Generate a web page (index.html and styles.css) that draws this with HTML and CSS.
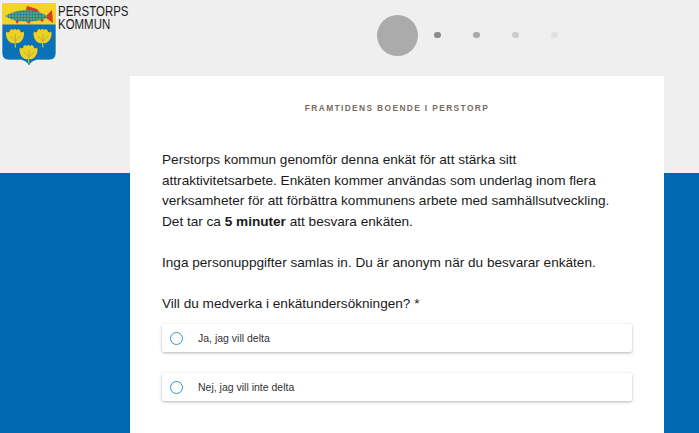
FILE: index.html
```html
<!DOCTYPE html>
<html lang="sv">
<head>
<meta charset="utf-8">
<title>Framtidens boende i Perstorp</title>
<link rel="stylesheet" href="styles.css">
</head>
<body>
<div class="page">
  <header class="top">
    <div class="brand">
      <svg class="crest" viewBox="0 0 57 67" width="57" height="67" aria-hidden="true">
        <defs>
          <pattern id="scales" width="3" height="3" patternUnits="userSpaceOnUse">
            <rect width="3" height="3" fill="#2c8f97"/>
            <circle cx="1" cy="1" r="0.7" fill="#b9b43a"/>
            <circle cx="2.5" cy="2.5" r="0.5" fill="#1f6f9e"/>
          </pattern>
          <g id="leaf">
            <path d="M9.500 19.500L9 15C7 16 3 14.500 1.500 10.500C0.500 8 0 5 1 3.500C2 4.500 3 4.500 4 4C4 2 5.500 1 7 1C7 2 8 2.500 9.500 0.500C11 2.500 12 2 12 1C13.500 1 15 2 15 4C16 4.500 17 4.500 18 3.500C19 5 18.500 8 17.500 10.500C16 14.500 12 16 10 15L10.500 19.500Z" fill="#ecd023"/>
            <path d="M10 15V6M10 13L5 8M10 13L15 8" stroke="#a9aa3f" stroke-width="0.8" fill="none"/>
          </g>
        </defs>
        <path d="M2 3H56V53Q56 60 49 60H37Q31 61 29 66Q27 61 21 60H9Q2 60 2 53Z" fill="#0b72b7" stroke="#fbfbfb" stroke-width="0.6"/>
        <path d="M2 3H56V24.500H2Z" fill="#f5d327"/>
        <path d="M26 10L27 6L37 9L40 13Z" fill="#d8392c"/>
        <path d="M15 20L20 20L17 24Z M26 21L31 21L29 24Z M37 19L44 18L43 22Z" fill="#d8392c"/>
        <path d="M46 16L52 10L53 23L46 18Z" fill="#d8392c"/>
        <path d="M5 16Q15 10 27 10Q38 10 47 16L47 18Q36 22 25 21.500Q12 21 5 16Z" fill="url(#scales)"/>
        <use href="#leaf" x="5.500" y="28"/>
        <use href="#leaf" x="33" y="28"/>
        <use href="#leaf" x="19" y="44"/>
      </svg>
      <div class="brand-name">PERSTORPS<br>KOMMUN</div>
    </div>
    <div class="steps">
      <span class="step step-current"></span>
      <span class="step step-2"></span>
      <span class="step step-3"></span>
      <span class="step step-4"></span>
      <span class="step step-5"></span>
    </div>
  </header>
  <main class="card">
    <h1 class="title">FRAMTIDENS BOENDE I PERSTORP</h1>
    <p class="text">Perstorps kommun genomför denna enkät för att stärka sitt attraktivitetsarbete. Enkäten kommer användas som underlag inom flera verksamheter för att förbättra kommunens arbete med samhällsutveckling. Det tar ca <b>5 minuter</b> att besvara enkäten.</p>
    <p class="text">Inga personuppgifter samlas in. Du är anonym när du besvarar enkäten.</p>
    <p class="text question">Vill du medverka i enkätundersökningen? *</p>
    <div class="option"><span class="radio"></span><span>Ja, jag vill delta</span></div>
    <div class="option"><span class="radio"></span><span>Nej, jag vill inte delta</span></div>
  </main>
</div>
</body>
</html>
```
FILE: styles.css
```css
html, body {
  margin: 0;
  height: 100%;
}
body {
  font-family: "Liberation Sans", Arial, sans-serif;
  overflow: hidden;
}
.page {
  height: 433px;
  overflow: hidden;
  background: linear-gradient(#efefef 173px, #0068b0 173px);
}
.top {
  height: 76px;
  display: flex;
  align-items: flex-start;
}
.brand {
  width: 377px;
  display: flex;
  align-items: flex-start;
}
.crest {
  flex: none;
  margin-right: 1px;
}
.brand-name {
  font-size: 14.5px;
  line-height: 13px;
  color: #1c1c1c;
  padding-top: 5px;
  transform: scaleX(0.79);
  transform-origin: left top;
}
.steps {
  display: flex;
  align-items: center;
  height: 70px;
  gap: 32.5px;
}
.step {
  width: 6.5px;
  height: 6.5px;
  border-radius: 50%;
}
.step-current {
  width: 41px;
  height: 41px;
  background: #ababab;
  margin-right: -16.5px;
}
.step-2 { background: #8b8b8b; }
.step-3 { background: #a9a9a9; }
.step-4 { background: #cccccc; }
.step-5 { background: #e1e1e1; }
.card {
  width: 534px;
  height: 357px;
  box-sizing: border-box;
  margin-left: 130px;
  padding: 27px 32px 0;
  background: #fff;
}
.title {
  margin: 0 0 37px;
  font-size: 8.4px;
  line-height: 10px;
  font-weight: bold;
  letter-spacing: 1.37px;
  text-align: center;
  color: #7a6a62;
}
.text {
  margin: 0 0 20.400px;
  font-size: 13.6px;
  line-height: 20.600px;
  color: #1a1a1a;
}
.question {
  margin-bottom: 10px;
}
.option {
  width: 470px;
  height: 28px;
  margin-bottom: 21px;
  display: flex;
  align-items: center;
  gap: 15px;
  padding-left: 8px;
  box-sizing: border-box;
  font-size: 10.500px;
  color: #333;
  background: #fff;
  border-radius: 2px;
  box-shadow: 0 1px 3px rgba(0, 0, 0, 0.3);
}
.radio {
  width: 11px;
  height: 11px;
  border: 1.5px solid #3a94c8;
  border-radius: 50%;
  flex: none;
  background: #fff;
}
```
